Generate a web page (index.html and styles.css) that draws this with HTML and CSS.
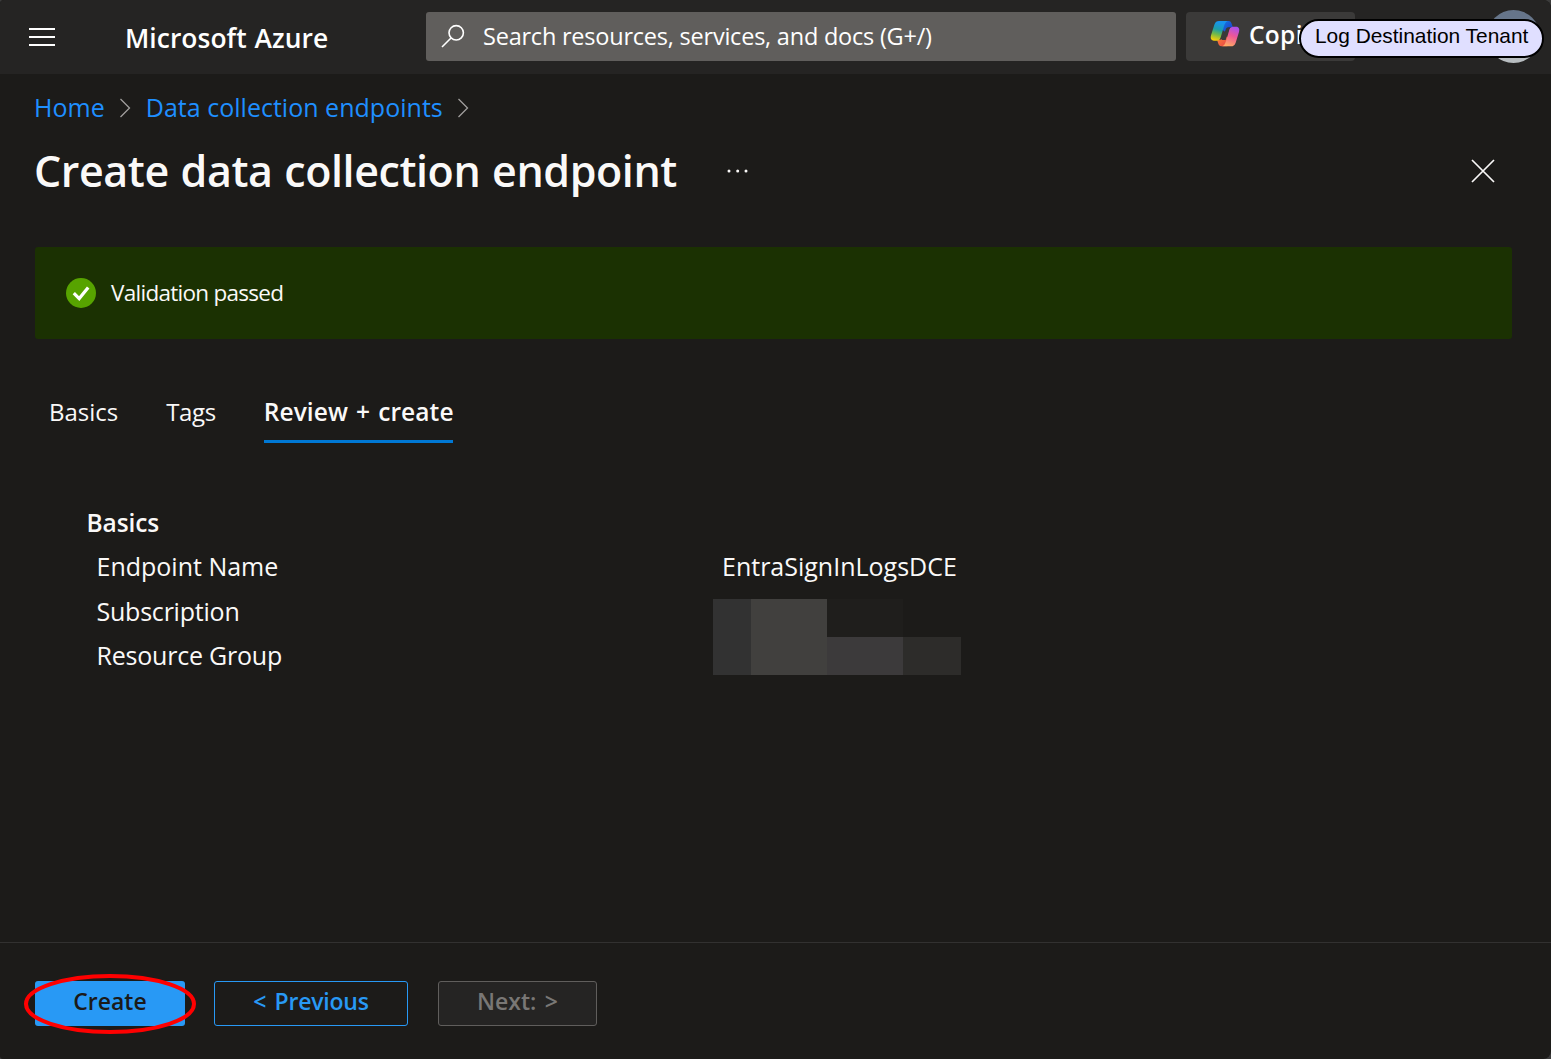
FILE: index.html
```
<!DOCTYPE html>
<html lang="en">
<head>
<meta charset="utf-8">
<title>Create data collection endpoint - Microsoft Azure</title>
<link rel="stylesheet" href="styles.css">
</head>
<body>
<div class="portal">
  <header class="topbar">
    <svg class="menu-icon" width="26" height="18" viewBox="0 0 26 18" aria-hidden="true"><path d="M0 1h26M0 9h26M0 17h26"/></svg>
    <span class="brand">Microsoft Azure</span>
    <div class="search">
      <svg class="search-icon" width="24" height="24" viewBox="0 0 24 24" aria-hidden="true"><circle cx="15.2" cy="8.8" r="7.2"/><path d="M10 14L1 23"/></svg>
      <span>Search resources, services, and docs (G+/)</span>
    </div>
    <button class="copilot">
      <svg width="30" height="27.3" viewBox="0 0 90 82" aria-hidden="true">
        <defs>
          <linearGradient id="cool" x1="0.6" y1="0" x2="0.35" y2="1"><stop offset="0.1" stop-color="#1794ee"/><stop offset="0.45" stop-color="#1d9ea8"/><stop offset="0.7" stop-color="#71b94a"/><stop offset="1" stop-color="#f4cf0a"/></linearGradient>
          <linearGradient id="warm" x1="0.7" y1="0" x2="0.35" y2="1"><stop offset="0" stop-color="#a950ee"/><stop offset="0.45" stop-color="#ee5796"/><stop offset="1" stop-color="#ffab63"/></linearGradient>
          <linearGradient id="navy" x1="0" y1="0" x2="1" y2="1"><stop offset="0" stop-color="#1676de"/><stop offset="1" stop-color="#1c38c9"/></linearGradient>
          <linearGradient id="ember" x1="0" y1="0" x2="1" y2="1"><stop offset="0" stop-color="#fb8b32"/><stop offset="1" stop-color="#e9404b"/></linearGradient>
        </defs>
        <path fill="url(#navy)" d="M38 3H56C62 3 64 8 66 14L69 23H60C51 23 49 27 46 36L38 30Z"/>
        <path fill="url(#ember)" d="M52 79H34C28 79 26 74 24 68L21 59H30C39 59 41 55 44 46L52 52Z"/>
        <path fill="url(#cool)" d="M27 3H54C47 4 44 13 41 22L33 49C30 60 27 62 20 62H12C2 62 1 54 3 46L13 14C16 6 20 3 27 3Z"/>
        <path fill="url(#warm)" d="M63 79H36C43 78 46 69 49 60L57 33C60 22 63 20 70 20H78C88 20 89 28 87 36L77 68C74 76 70 79 63 79Z"/>
        <path fill="#3b3a39" d="M47 29C48 25 50 22 55 22H66C60 22 57 26 55 33L47 60H35Z"/>
      </svg>
      <span>Copilot</span>
    </button>
    <span class="avatar"></span>
    <span class="tenant-label">Log Destination Tenant</span>
  </header>

  <main class="blade">
    <nav class="crumbs">
      <a>Home</a>
      <svg class="chevron" width="12" height="20" viewBox="0 0 12 20" aria-hidden="true"><path d="M1.5 1L10.5 10L1.5 19"/></svg>
      <a>Data collection endpoints</a>
      <svg class="chevron" width="12" height="20" viewBox="0 0 12 20" aria-hidden="true"><path d="M1.5 1L10.5 10L1.5 19"/></svg>
    </nav>
    <div class="title-row">
      <h1>Create data collection endpoint</h1>
      <svg class="more" width="22" height="4" viewBox="0 0 22 4" aria-hidden="true"><circle cx="2" cy="2" r="1.5"/><circle cx="10.7" cy="2" r="1.5"/><circle cx="19" cy="2" r="1.5"/></svg>
      <svg class="close" width="24" height="24" viewBox="0 0 24 24" aria-hidden="true"><path d="M1 1L23 23M23 1L1 23"/></svg>
    </div>

    <div class="banner">
      <svg width="30" height="30" viewBox="0 0 30 30" aria-hidden="true"><circle cx="15" cy="15" r="15" fill="#57a300"/><path d="M7.8 15.2L13.2 20.6L22.2 9.6" fill="none" stroke="#fff" stroke-width="3.2"/></svg>
      <span>Validation passed</span>
    </div>

    <div class="tabs">
      <span class="tab">Basics</span>
      <span class="tab tab-tags">Tags</span>
      <span class="tab active">Review + create</span>
    </div>

    <section class="summary">
      <h2>Basics</h2>
      <span class="field">Endpoint Name</span>
      <span class="value">EntraSignInLogsDCE</span>
      <span class="field tight">Subscription</span>
      <span class="redacted"><i class="tone-a"></i><i class="tone-b"></i><i class="tone-c"></i><i class="tone-d"></i><i class="tone-e"></i></span>
      <span class="field tight">Resource Group</span>
    </section>
  </main>

  <footer class="actions">
    <button class="btn create">Create
      <svg class="highlight" width="174" height="62" viewBox="0 0 174 62" aria-hidden="true"><ellipse cx="87" cy="31" rx="84" ry="28"/></svg>
    </button>
    <button class="btn previous">&lt; Previous</button>
    <button class="btn next" disabled>Next: &gt;</button>
  </footer>
</div>
</body>
</html>
```
FILE: styles.css
```
* { box-sizing: border-box; }
body {
  margin: 0;
  background: #3c3c3c;
  color: #faf9f8;
  font-family: "Open Sans", "Segoe UI", sans-serif;
  font-size: 25px;
}
button { font: inherit; border: 0; padding: 0; margin: 0; }
svg { display: block; flex: none; }
.portal {
  height: 1059px;
  display: flex;
  flex-direction: column;
  overflow: hidden;
  background: #1c1b19;
  border-radius: 4px 8px 8px 3px;
}

.topbar {
  position: relative;
  display: flex;
  align-items: center;
  height: 74px;
  padding-left: 29px;
  background: #252423;
  white-space: nowrap;
}
.menu-icon { stroke: #fff; stroke-width: 2; }
.brand {
  width: 301px;
  margin-left: 70px;
  font-size: 26.4px;
  font-weight: 600;
  letter-spacing: 0.05px;
  word-spacing: 1px;
  line-height: 36px;
  padding-top: 1px;
  color: #fff;
}
.search {
  display: flex;
  align-items: center;
  width: 750px;
  height: 49px;
  margin-top: -1px;
  padding: 0 0 1px 15px;
  gap: 18px;
  background: #605e5c;
  border-radius: 3px;
  color: #fff;
  font-size: 23.5px;
  letter-spacing: -0.22px;
}
.search-icon { fill: none; stroke: #fff; stroke-width: 1.6; }
.copilot {
  display: flex;
  align-items: center;
  width: 169px;
  height: 49px;
  margin: -1px 0 0 10px;
  padding: 0 0 5px 24px;
  gap: 9px;
  background: #3b3a39;
  border-radius: 4px;
  color: #fff;
  font-size: 24.5px;
  font-weight: 600;
  letter-spacing: 0.3px;
}
.avatar {
  width: 53px;
  height: 53px;
  margin: -2px 0 0 132px;
  border-radius: 50%;
  background: linear-gradient(#66758a 15%, #b8bdc0 85%);
}
.tenant-label {
  position: absolute;
  left: 1299px;
  top: 19px;
  width: 245px;
  height: 39px;
  padding-left: 14px;
  border: 2px solid #000;
  border-radius: 20px;
  background: #e0dfff;
  color: #000;
  font: 20.9px/29px "Liberation Sans", Arial, sans-serif;
}

.blade { flex: 1; padding: 16px 39px 0 34px; }
.crumbs {
  display: flex;
  align-items: center;
  height: 34px;
  gap: 14px;
  line-height: 34px;
  color: #1f8fff;
}
.crumbs a { letter-spacing: 0.02px; }
.crumbs a + .chevron + a { margin-left: 1px; }
.chevron { fill: none; stroke: #a19f9d; stroke-width: 1.3; margin-top: 2px; }
.title-row {
  display: flex;
  align-items: center;
  height: 57px;
  margin-top: 18px;
}
h1 {
  width: 692.5px;
  margin: 0;
  font-size: 43px;
  font-weight: 600;
  line-height: 57px;
  letter-spacing: -0.42px;
  word-spacing: 1px;
}
.more { fill: #faf9f8; }
.close { margin: 1px 17px 0 auto; stroke: #faf9f8; stroke-width: 1.7; }

.banner {
  display: flex;
  align-items: center;
  height: 92px;
  margin: 48px 0 0 1px;
  padding-left: 31px;
  gap: 15px;
  background: #1b3102;
  border-radius: 3px;
  font-size: 22.5px;
  letter-spacing: -0.72px;
}
.banner span { padding-bottom: 2px; }

.tabs {
  display: flex;
  gap: 48px;
  margin-top: 53px;
  padding-left: 15px;
  font-size: 24px;
  line-height: 40px;
}
.tab { height: 51px; white-space: nowrap; }
.tab-tags { letter-spacing: -0.4px; }
.active {
  width: 189px;
  font-size: 24.5px;
  font-weight: 600;
  letter-spacing: 0.1px;
  word-spacing: 1.5px;
  border-bottom: 3px solid #0078d4;
}

.summary {
  display: grid;
  grid-template-columns: 616.5px 248px;
  grid-template-rows: repeat(4, 44.4px);
  margin-top: 57px;
  padding-left: 62.5px;
  line-height: 44.4px;
}
h2 {
  grid-column: 1 / 3;
  margin: 1px 0 0 -10px;
  font-size: 24.5px;
  font-weight: 600;
  letter-spacing: -0.1px;
}
.tight { letter-spacing: -0.22px; }
.value { padding-left: 9px; }
.redacted {
  grid-column: 2;
  grid-row: 3 / 5;
  display: grid;
  grid-template-columns: 38px 76px 76px 58px;
  grid-template-rows: 38px 38px;
  margin-top: 10px;
}
.tone-a { grid-row: 1 / 3; background: #323232; }
.tone-b { grid-row: 1 / 3; background: #41403e; }
.tone-c { background: #1f1e1c; }
.tone-d { grid-column: 3; background: #3c3a3b; }
.tone-e { grid-column: 4; background: #2d2c2a; }

.actions {
  display: flex;
  height: 117px;
  padding: 38px 0 0 35px;
  border-top: 1px solid #323130;
}
.btn {
  position: relative;
  height: 45px;
  padding-bottom: 5px;
  border: 1px solid transparent;
  border-radius: 3px;
  font-size: 23px;
  font-weight: 600;
  line-height: 36px;
}
.create { width: 150px; background: #2899f5; color: #1b1a19; }
.previous { width: 194px; margin-left: 29px; background: none; border-color: #2899f5; color: #2899f5; letter-spacing: -0.2px; word-spacing: 2.5px; }
.next { width: 159px; margin-left: 30px; background: #252423; border-color: #605e5c; color: #797775; word-spacing: 2.5px; }
.highlight {
  position: absolute;
  left: -13px;
  top: -9px;
  fill: none;
  stroke: #f00;
  stroke-width: 4;
}
```
